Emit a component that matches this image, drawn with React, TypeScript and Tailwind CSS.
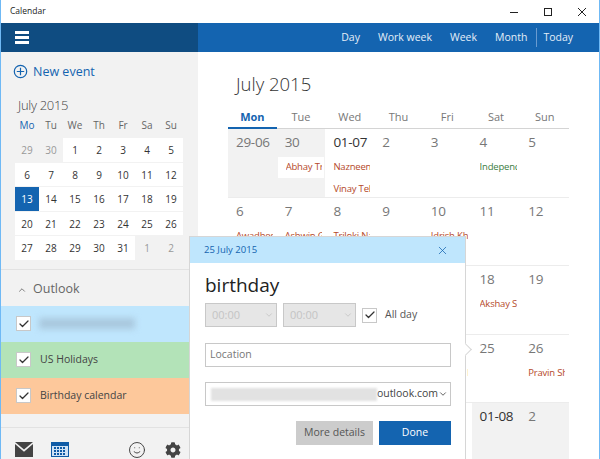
import { Check, ChevronDown, ChevronUp, Smile, X } from 'lucide-react';
import { FaCog } from 'react-icons/fa';

const font = { fontFamily: '"Open Sans", "Noto Sans", sans-serif' };

const navItems = ['Day', 'Work week', 'Week', 'Month'];
const weekDays = ['Mon', 'Tue', 'Wed', 'Thu', 'Fri', 'Sat', 'Sun'];
const miniDays = ['Mo', 'Tu', 'We', 'Th', 'Fr', 'Sa', 'Su'];
const miniDates = [
	29, 30, 1, 2, 3, 4, 5, 6, 7, 8, 9, 10, 11, 12, 13, 14, 15, 16, 17, 18, 19, 20, 21, 22, 23, 24,
	25, 26, 27, 28, 29, 30, 31, 1, 2,
];

interface DayCell {
	label: string;
	event?: string;
	green?: boolean;
	past?: boolean;
	card?: boolean;
	second?: string;
	dark?: boolean;
}

const weeks: DayCell[] = [
	{ label: '29-06', past: true },
	{ label: '30', past: true, event: 'Abhay Trivedi', card: true },
	{ label: '01-07', dark: true, event: 'Nazneen Khan', second: 'Vinay Telang' },
	{ label: '2' },
	{ label: '3' },
	{ label: '4', event: 'Independence Day', green: true },
	{ label: '5' },
	{ label: '6', event: 'Awadhesh Rai' },
	{ label: '7', event: 'Ashwin Gupta' },
	{ label: '8', event: 'Triloki Nath' },
	{ label: '9' },
	{ label: '10', event: 'Idrish Khan' },
	{ label: '11' },
	{ label: '12' },
	{ label: '13' },
	{ label: '14' },
	{ label: '15' },
	{ label: '16' },
	{ label: '17' },
	{ label: '18', event: 'Akshay Sharma' },
	{ label: '19' },
	{ label: '20' },
	{ label: '21' },
	{ label: '22' },
	{ label: '23' },
	{ label: '24', event: 'Mahesh Rane' },
	{ label: '25' },
	{ label: '26', event: 'Pravin Shah' },
	{ label: '27' },
	{ label: '28' },
	{ label: '29' },
	{ label: '30' },
	{ label: '31' },
	{ label: '01-08', past: true, dark: true },
	{ label: '2', past: true },
];

function CheckBox({ className }: { className: string }) {
	return (
		<span
			className={`flex h-[15px] w-[15px] shrink-0 items-center justify-center border border-[#c8c8c8] bg-white ${className}`}
		>
			<Check size={12} strokeWidth={2.5} className="text-[#333]" />
		</span>
	);
}

function CalendarRow({ color, label }: { color: string; label?: string }) {
	return (
		<div className={`flex h-9 items-center gap-[9px] pl-[15px] ${color}`}>
			<CheckBox className="" />
			{label ? (
				<span className="text-[10.5px] text-[#444]">{label}</span>
			) : (
				<div className="-ml-[1px] h-[11px] w-[96px] bg-[#a9c8de] blur-[3px]" />
			)}
		</div>
	);
}

function Sidebar() {
	return (
		<aside className="flex w-[197px] shrink-0 flex-col bg-[#f2f2f2]">
			<button type="button" className="mt-[12px] flex items-center gap-[5px] pl-[12px] text-[#1464b0]">
				<svg width="15" height="15" viewBox="0 0 15 15" fill="none" stroke="currentColor" strokeWidth="1.2">
					<circle cx="7.5" cy="7.5" r="6.2" />
					<path d="M7.5 3.8v7.4M3.8 7.5h7.4" />
				</svg>
				<span className="text-[12.5px] leading-[15px]">New event</span>
			</button>

			<div className="mt-[16px] pl-[17px] text-[13px] leading-[20px] font-light tracking-[-0.3px] text-[#444]">
				July 2015
			</div>

			<div className="mt-0 ml-[14px] grid w-[168px] grid-cols-7 text-center">
				{miniDays.map((d, i) => (
					<div
						key={d}
						className={`mb-[3px] h-[20px] text-[10px] leading-[20px] ${i === 0 ? 'text-[#1464b0]' : 'text-[#666]'}`}
					>
						{d}
					</div>
				))}
				{miniDates.map((d, i) => {
					const outside = i < 2 || i > 32;
					const today = i === 14;
					return (
						<div
							key={`${d}-${i}`}
							className={`h-[24.5px] border-b border-[#f2f2f2] text-[10px] leading-[24px] ${
								today ? 'bg-[#1464b0] text-white' : outside ? 'text-[#999]' : 'bg-white text-[#333]'
							}`}
						>
							{d}
						</div>
					);
				})}
			</div>

			<div className="mt-[8px] border-t border-[#e2e2e2]" />
			<div className="flex h-[36px] items-center gap-[6px] pt-1 pl-[16px] text-[#666]">
				<ChevronUp size={10} strokeWidth={2} />
				<span className="text-[12.5px]">Outlook</span>
			</div>

			<CalendarRow color="bg-[#bfe6fd]" />
			<CalendarRow color="bg-[#b3e3b8]" label="US Holidays" />
			<CalendarRow color="bg-[#fdc89b]" label="Birthday calendar" />

			<div className="mt-[13px] flex items-center border-t border-[#e2e2e2] pt-[13px] pl-[14px]">
				<svg width="18" height="15" viewBox="0 0 18 15">
					<path d="M0 0h18L9 7.5z" fill="#444" />
					<path d="M0 2v13h18V2L9 9.8z" fill="#444" />
				</svg>
				<svg width="18" height="15" viewBox="0 0 18 15" className="ml-[18px]">
					<rect width="18" height="15" fill="#0f5ba6" />
					<rect x="1" y="4" width="16" height="10" fill="#cfe2f5" />
					<path
						d="M3 5h2v2H3zM6 5h2v2H6zM9 5h2v2H9zM12 5h2v2h-2zM3 8h2v2H3zM6 8h2v2H6zM9 8h2v2H9zM12 8h2v2h-2zM3 11h2v2H3zM6 11h2v2H6zM9 11h2v2H9zM12 11h2v2h-2z"
						fill="#0f5ba6"
					/>
				</svg>
				<Smile size={18} strokeWidth={1.3} className="ml-[59px] text-[#444]" />
				<FaCog size={16} className="ml-[19px] text-[#444]" />
			</div>
		</aside>
	);
}

function MonthGrid() {
	return (
		<main className="min-w-0 flex-1 pl-[30px]">
			<h1 className="mt-[19px] pl-2 text-[18.5px] leading-[26px] font-light text-[#333]">July 2015</h1>
			<div className="mt-[9px] grid w-[341px] grid-cols-7 border-b border-[#d4d4d4] text-center text-[11px] leading-[21px] text-[#777]">
				{weekDays.map((d, i) => (
					<div key={d} className={i === 0 ? '-mb-px border-b-2 border-[#1464b0] font-bold text-[#1464b0]' : ''}>
						{d}
					</div>
				))}
			</div>
			<div className="grid w-[341px] grid-cols-7 auto-rows-[68.5px]">
				{weeks.map((day, i) => (
					<div
						key={`${day.label}-${i}`}
						className={`relative border-b border-[#ececec] ${day.past ? 'bg-[#f2f2f2]' : ''}`}
					>
						<div
							className={`pt-[3px] pl-2 text-[13.5px] leading-[20px] tracking-[-0.3px] ${
								day.dark ? 'text-[#333]' : 'text-[#777]'
							}`}
						>
							{day.label}
						</div>
						{day.event && (
							<div
								className={`mt-[5px] flex h-[21px] items-center overflow-hidden pr-[2px] pl-[8px] text-[9.5px] tracking-[-0.2px] whitespace-nowrap ${
									day.green ? 'text-[#3c7d3f]' : 'text-[#b5492a]'
								} ${day.card ? 'mx-px bg-white' : ''}`}
							>
								<span className="w-[37px] overflow-hidden">{day.event}</span>
							</div>
						)}
						{day.second && (
							<div className="flex h-[22px] items-center overflow-hidden pl-[8px] text-[9.5px] tracking-[-0.2px] whitespace-nowrap text-[#b5492a]">
								<span className="w-[37px] overflow-hidden">{day.second}</span>
							</div>
						)}
					</div>
				))}
			</div>
		</main>
	);
}

function EventPopup() {
	return (
		<div className="absolute top-[236px] left-[188px] h-[240px] w-[277px] border border-[#d6d6d6] bg-white">
			<div className="flex h-[26px] items-center justify-between bg-[#bfe6fd] pr-[16px] pl-[14px] text-[#1464b0]">
				<span className="text-[9.5px]">25 July 2015</span>
				<X size={13} strokeWidth={1.4} />
			</div>
			<div className="px-[15px]">
				<div className="mt-[6px] h-[32px] text-[19px] leading-[32px] text-[#222]">birthday</div>
				<div className="mt-[2px] flex items-center">
					<div className="flex h-[24px] w-[72px] items-center justify-between border border-[#c8c8c8] bg-[#e6e6e6] pr-[2px] pl-[6px] text-[11px] text-[#c4c4c4]">
						00:00 <ChevronDown size={10} />
					</div>
					<div className="ml-[6px] flex h-[24px] w-[73px] items-center justify-between border border-[#c8c8c8] bg-[#e6e6e6] pr-[2px] pl-[6px] text-[11px] text-[#c4c4c4]">
						00:00 <ChevronDown size={10} />
					</div>
					<CheckBox className="ml-[6px]" />
					<span className="ml-[8px] text-[10.5px] text-[#555]">All day</span>
				</div>
				<div className="mt-[16px] flex h-[24px] w-[246px] items-center border border-[#c8c8c8] pl-[4px] text-[10.5px] text-[#777]">
					Location
				</div>
				<div className="mt-[15px] flex h-[24px] w-[246px] items-center border border-[#c8c8c8] pr-[2px] pl-[5px] text-[10.5px] text-[#444]">
					<div className="h-[13px] w-[166px] bg-[#e2e2e2] blur-[1px]" />
					<span className="flex-1">outlook.com</span>
					<ChevronDown size={10} />
				</div>
				<div className="mt-[15px] flex w-[246px] justify-end gap-[6px] text-[10.5px]">
					<button type="button" className="h-[24px] w-[77px] bg-[#cccccc] text-[#555]">
						More details
					</button>
					<button type="button" className="h-[24px] w-[72px] bg-[#1464b0] text-white">
						Done
					</button>
				</div>
			</div>
			<span className="absolute top-[108px] right-[-5px] h-[9px] w-[9px] rotate-45 border-t border-r border-[#d6d6d6] bg-white" />
		</div>
	);
}

export default function App() {
	return (
		<div className="relative h-[459px] w-[600px] overflow-hidden border-x border-[#6fb9f5] bg-white" style={font}>
			<div className="flex h-[23px] items-center justify-between pr-[13px] pl-[9px]">
				<span className="text-[8.5px] text-[#222]">Calendar</span>
				<div className="flex items-center gap-[26px] text-[#222]">
					<svg width="8" height="8" viewBox="0 0 8 8" stroke="currentColor">
						<path d="M0 4.5h8" />
					</svg>
					<svg width="8" height="8" viewBox="0 0 8 8" fill="none" stroke="currentColor">
						<rect x="0.5" y="0.5" width="7" height="7" />
					</svg>
					<svg width="8" height="8" viewBox="0 0 8 8" stroke="currentColor">
						<path d="M0 0l8 8M8 0l-8 8" />
					</svg>
				</div>
			</div>

			<header className="flex h-[29px]">
				<div className="flex w-[197px] items-center bg-[#0f4c81] pl-[14px]">
					<div className="flex w-[14px] flex-col gap-[2px]">
						<span className="h-[3px] bg-white" />
						<span className="h-[3px] bg-white" />
						<span className="h-[3px] bg-white" />
					</div>
				</div>
				<nav className="flex flex-1 items-center justify-end gap-[18px] bg-[#1464b0] pr-[26px] text-[10.5px] text-[#e4eef8]">
					{navItems.map((item) => (
						<span key={item}>{item}</span>
					))}
					<span className="-mr-[12px] -ml-[9px] h-[19px] w-px bg-[#6a9bd0]" />
					<span>Today</span>
				</nav>
			</header>

			<div className="flex h-[407px]">
				<Sidebar />
				<MonthGrid />
			</div>

			<EventPopup />
		</div>
	);
}
